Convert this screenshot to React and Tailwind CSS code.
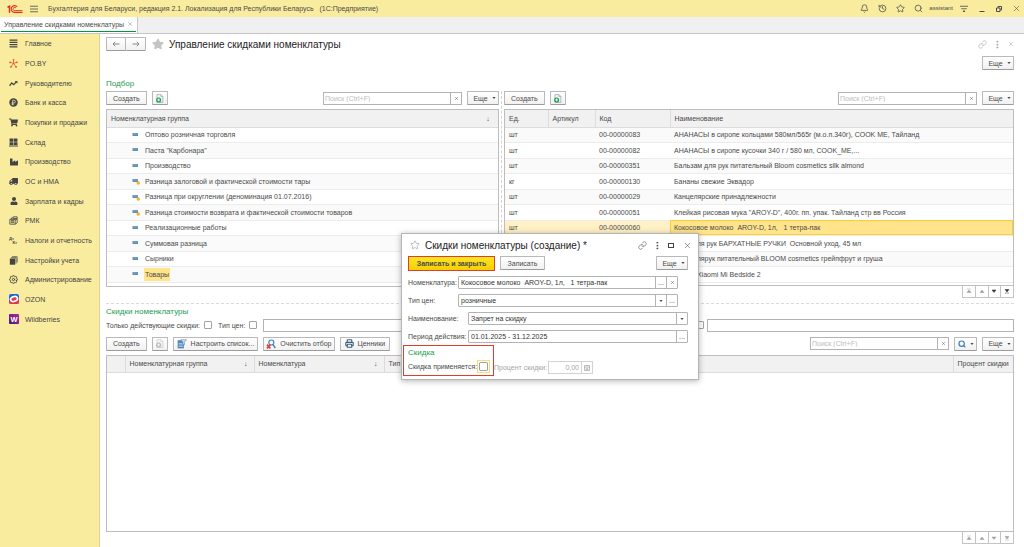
import React from "react";
import { Bell, History, Link, Printer, Search, Star, X } from "lucide-react";
import { FaIndustry, FaShoppingCart, FaStar, FaTruck, FaUser } from "react-icons/fa";
import { FiSettings } from "react-icons/fi";

const groups = [
  { name: "Оптово розничная торговля" },
  { name: 'Паста "Карбонара"' },
  { name: "Производство" },
  { name: "Разница залоговой и фактической стоимости тары", marked: true },
  { name: "Разница при округлении (деноминация 01.07.2016)", marked: true },
  { name: "Разница стоимости возврата и фактической стоимости товаров", marked: true },
  { name: "Реализационные работы" },
  { name: "Суммовая разница" },
  { name: "Сырники" },
  { name: "Товары", active: true },
];

const products = [
  { unit: "шт", code: "00-00000083", name: "АНАНАСЫ в сиропе кольцами 580мл/565г (м.о.п.340г), COOK ME, Тайланд" },
  { unit: "шт", code: "00-00000082", name: "АНАНАСЫ в сиропе кусочки 340 г / 580 мл, COOK_ME,..." },
  { unit: "шт", code: "00-00000351", name: "Бальзам для рук питательный Bloom cosmetics silk almond" },
  { unit: "кг", code: "00-00000130", name: "Бананы свежие Эквадор" },
  { unit: "шт", code: "00-00000029", name: "Канцелярские принадлежности" },
  { unit: "шт", code: "00-00000051", name: 'Клейкая рисовая мука "AROY-D", 400г. пп. упак. Тайланд стр вв Россия' },
  { unit: "шт", code: "00-00000060", name: "Кокосовое молоко  AROY-D, 1л,   1 тетра-пак", active: true },
  { unit: "шт", code: "00-00000071", name: "Крем для рук БАРХАТНЫЕ РУЧКИ  Основной уход, 45 мл" },
  { unit: "шт", code: "00-00000072", name: "Крем длярук питательный BLOOM cosmetics грейпфрут и груша" },
  { unit: "шт", code: "00-00000090", name: "Лампа Xiaomi Mi Bedside 2" },
];

/* ---------- icons ---------- */

const Logo = () => (
  <svg viewBox="0 0 32 20" className="h-[10px] w-4" fill="none" stroke="#e0301e" strokeWidth="2.200">
    <path d="M1 6.500 5 4.500V17.600" strokeWidth="3" />
    <path d="M20.500 5.800A6.800 6.800 0 1 0 15.500 16.800H31" />
    <path d="M18 8.300A3.200 3.200 0 1 0 15.500 13.200H31" strokeWidth="1.800" />
  </svg>
);

const LinesIcon = () => (
  <svg viewBox="0 0 16 16" className="size-[9px]" stroke="currentColor" strokeWidth="2">
    <path d="M1 2h14M1 6h14M1 10h14M1 14h14" />
  </svg>
);

const SparkIcon = () => (
  <svg viewBox="0 0 16 16" className="size-[9px]" stroke="#e2472f" strokeWidth="1.4" fill="#e2472f">
    <path d="M8 8V2M8 8l5.500-2M8 8l4 5M8 8l-4 5M8 8 2.500 6" />
    <circle cx="8" cy="1.500" r=".9" />
    <circle cx="14" cy="6" r=".9" />
    <circle cx="12.500" cy="14" r=".9" />
    <circle cx="3.500" cy="14" r=".9" />
    <circle cx="2" cy="6" r=".9" />
  </svg>
);

const TrendIcon = () => (
  <svg viewBox="0 0 16 16" className="size-[9px]" fill="none" stroke="currentColor" strokeWidth="2.200">
    <path d="m1 12 4-5 3.500 3L13 5" />
    <path d="M10 3.500h5v5z" fill="currentColor" stroke="none" />
  </svg>
);

const RubleIcon = () => (
  <svg viewBox="0 0 16 16" className="size-[9px]">
    <circle cx="8" cy="8" r="7.500" fill="currentColor" />
    <path d="M6.500 13V4H9a2.300 2.300 0 0 1 0 4.800H4.500M4.500 11H9" fill="none" stroke="#faec9e" strokeWidth="1.300" />
  </svg>
);

const StockIcon = () => (
  <svg viewBox="0 0 16 16" className="size-[9px]" fill="currentColor">
    <path d="M1 1h6.500v5.500H1zM8.500 1H15v5.500H8.500zM1 7.500h6.500v5H1zM8.500 7.500H15v5H8.500zM0 13.500h16V15H0z" />
  </svg>
);

const CashboxIcon = () => (
  <svg viewBox="0 0 16 16" className="size-[9px]" fill="none" stroke="currentColor" strokeWidth="1.500">
    <path d="M1.500 6H11v8.500H1.500zM4 5.500V3.500h3M7.500 1.500h7v3h-7zM11 7l3.500-1.500V12L11 14.500" />
    <path d="M3.500 8.500h5.500M3.500 11h5.500" strokeWidth="1.800" />
  </svg>
);

const DebitIcon = () => (
  <svg viewBox="0 0 16 16" className="size-[9px]" fill="currentColor" fontSize="7.500" fontWeight="700">
    <text x="0" y="7">Дт</text>
    <text x="6" y="14">Кт</text>
  </svg>
);

const BooksIcon = () => (
  <svg viewBox="0 0 16 16" className="size-[9px]" fill="currentColor">
    <path d="M1.500 4.500h9.500V15.500H1.500z" />
    <path d="M3.500 3h9v10.500M5.500 1.200h9V11.500" fill="none" stroke="currentColor" strokeWidth="1.300" />
  </svg>
);

const OzonIcon = () => (
  <svg viewBox="0 0 20 20" className="size-[10px]">
    <rect width="20" height="20" rx="4" fill="#1768e8" />
    <path d="M0 12c4 6 14 6 20-3v7a4 4 0 0 1-4 4H4a4 4 0 0 1-4-4z" fill="#e8354c" />
    <ellipse cx="10" cy="10" rx="8.800" ry="6.500" fill="#fff" transform="rotate(-18 10 10)" />
    <ellipse cx="10" cy="10" rx="5.500" ry="3.200" fill="#e8354c" transform="rotate(-18 10 10)" />
  </svg>
);

const WbIcon = () => (
  <svg viewBox="0 0 20 20" className="size-[10px]">
    <defs>
      <linearGradient id="wb" x1="0" y1="1" x2="1" y2="0">
        <stop offset="0" stopColor="#4b1a78" />
        <stop offset="1" stopColor="#b0289c" />
      </linearGradient>
    </defs>
    <rect width="20" height="20" rx="1.500" fill="url(#wb)" />
    <text x="10" y="15.500" textAnchor="middle" fontSize="15" fontWeight="700" fill="#fff">W</text>
  </svg>
);

const CopyIcon = ({ muted }) => (
  <svg viewBox="0 0 16 16" className={muted ? "size-[9px] opacity-50 grayscale" : "size-[9px]"}>
    <path d="M3.500 1h7L14 4.500V15H3.500z" fill="#eef3f7" stroke="#8aa0b2" strokeWidth="1.200" />
    <path d="M10.500 1v3.500H14" fill="none" stroke="#8aa0b2" />
    <circle cx="6.500" cy="10.500" r="4.500" fill="#23a04d" />
    <path d="M6.500 8v5M4 10.500h5" stroke="#fff" strokeWidth="1.600" />
  </svg>
);

const ListFilterIcon = () => (
  <svg viewBox="0 0 16 16" className="size-[10px]">
    <path d="M1 2h10v13H1z" fill="#4c86b8" />
    <path d="M2.500 7h7M2.500 9.500h7M2.500 12h7" stroke="#dbe8f2" />
    <path d="M6 1h9.500L12 5v4.500L9.500 8V5z" fill="#d4dde5" stroke="#5b7f9e" strokeWidth=".8" />
  </svg>
);

const ClearFilterIcon = () => (
  <svg viewBox="0 0 16 16" className="size-[10px]" fill="none">
    <circle cx="8.500" cy="5.500" r="4" stroke="#3f7fb5" strokeWidth="1.800" />
    <path d="m11 8.500 4 6" stroke="#3f7fb5" strokeWidth="2.200" />
    <path d="m1.500 9 5.500 6M7 9l-5.500 6" stroke="#e03a2f" strokeWidth="2.400" />
  </svg>
);

const ItemIcon = ({ marked }) => (
  <svg viewBox="0 0 18 16" className="h-2 w-[9px]">
    <rect x="1" y="4" width="11" height="6" fill="#5f8cb5" />
    <path d="M2 6h9" stroke="#a9c4dc" />
    {marked && <circle cx="12.500" cy="12" r="3.500" fill="#f0b429" />}
  </svg>
);

const menu = [
  { title: "Главное", icon: <LinesIcon /> },
  { title: "PO.BY", icon: <SparkIcon /> },
  { title: "Руководителю", icon: <TrendIcon /> },
  { title: "Банк и касса", icon: <RubleIcon /> },
  { title: "Покупки и продажи", icon: <FaShoppingCart size={9} /> },
  { title: "Склад", icon: <StockIcon /> },
  { title: "Производство", icon: <FaIndustry size={8} /> },
  { title: "ОС и НМА", icon: <FaTruck size={9} className="-scale-x-100" /> },
  { title: "Зарплата и кадры", icon: <FaUser size={8} /> },
  { title: "РМК", icon: <CashboxIcon /> },
  { title: "Налоги и отчетность", icon: <DebitIcon /> },
  { title: "Настройки учета", icon: <BooksIcon /> },
  { title: "Администрирование", icon: <FiSettings size={9} strokeWidth={2.5} /> },
  { title: "OZON", icon: <OzonIcon /> },
  { title: "Wildberries", icon: <WbIcon /> },
];

/* ---------- controls ---------- */

const Caret = () => (
  <svg viewBox="0 0 8 5" className="h-[2px] w-[4px] shrink-0" fill="currentColor">
    <path d="M0 0h8L4 5z" />
  </svg>
);

const Button = ({ children, className = "px-[6px]", ...rest }) => (
  <button
    className={`flex h-[14px] shrink-0 items-center justify-center gap-1 whitespace-nowrap rounded-[1px] border border-[#b9b9b9] border-b-[#9c9c9c] bg-linear-to-b from-white to-[#f1f1f1] ${className}`}
    {...rest}
  >
    {children}
  </button>
);

const MoreButton = () => (
  <Button className="w-8 pl-[3px]">
    Еще <Caret />
  </Button>
);

const SearchBox = () => (
  <div className="flex h-[13px] w-[139px] border border-[#b3b3b3] bg-white">
    <input
      aria-label="Поиск"
      placeholder="Поиск (Ctrl+F)"
      className="min-w-0 flex-1 px-px outline-none placeholder:text-[#bdbdbd]"
    />
    <button aria-label="Очистить" className="flex w-[11px] items-center justify-center border-l border-[#b3b3b3]">
      <X size={5} />
    </button>
  </div>
);

const Check = ({ id, className = "" }) => (
  <input
    id={id}
    type="checkbox"
    className={`size-2 shrink-0 appearance-none rounded-[1px] border border-[#a3a3a3] bg-white checked:bg-[#009646] ${className}`}
  />
);

const navPaths = [
  { label: "В начало", d: "M2 2h8M6 4 2 9h8z" },
  { label: "Вверх", d: "M6 4 2 9h8z" },
  { label: "Вниз", d: "M2 4h8L6 9z" },
  { label: "В конец", d: "M2 3h8L6 8zM2 10h8" },
];

const ListNav = ({ downActive }) => (
  <div className="ml-auto flex w-[52px] border-x border-b border-[#c4c4c4]">
    {navPaths.map((item, idx) => (
      <button
        key={item.label}
        aria-label={item.label}
        className={`flex h-[11px] flex-1 items-center justify-center border-l border-[#c4c4c4] first:border-l-0 ${
          downActive && idx > 1 ? "text-[#333]" : "text-[#a0a0a0]"
        }`}
      >
        <svg viewBox="0 0 12 12" className="size-[6px]" fill="currentColor" stroke="currentColor">
          <path d={item.d} />
        </svg>
      </button>
    ))}
  </div>
);

const Field = ({ id, label, value, wide, children }) => (
  <div className="flex items-center">
    <label htmlFor={id} className={wide ? "w-[60px] shrink-0" : "w-[50px] shrink-0"}>
      {label}
    </label>
    <div className="flex h-[13px] w-[220px] rounded-[1px] border border-[#b3b3b3]">
      <input id={id} defaultValue={value} className="min-w-0 flex-1 px-[2px] text-[#333] outline-none" />
      {children}
    </div>
  </div>
);

const FieldButton = ({ label, children }) => (
  <button aria-label={label} className="flex w-[11px] items-center justify-center border-l border-[#b3b3b3]">
    {children}
  </button>
);

/* ---------- page parts ---------- */

const TopBar = () => (
  <header className="flex h-[17px] items-center bg-[#faec9e] pl-[7px] pr-[3px]">
    <Logo />
    <button aria-label="Меню" className="ml-[7px]">
      <svg viewBox="0 0 16 16" className="size-2" stroke="currentColor" strokeWidth="1.600">
        <path d="M0 2.500h16M0 8h16M0 13.500h16" />
      </svg>
    </button>
    <span className="ml-[10px] whitespace-pre">
      Бухгалтерия для Беларуси, редакция 2.1. Локализация для Республики Беларусь{"   "}(1С:Предприятие)
    </span>
    <div className="ml-auto flex items-center gap-[9px]">
      <button aria-label="Уведомления"><Bell size={9} /></button>
      <button aria-label="История"><History size={9} /></button>
      <button aria-label="Избранное"><Star size={9} /></button>
      <button aria-label="Поиск"><Search size={9} /></button>
    </div>
    <span className="ml-[6px] text-[6px]">assistant</span>
    <button aria-label="Настройки" className="ml-[7px]">
      <svg viewBox="0 0 16 16" className="size-2" fill="currentColor" stroke="currentColor" strokeWidth="1.600">
        <path d="M0 2.500h16M2.500 7.500h11" />
        <path d="M6 12h4l-2 2z" />
      </svg>
    </button>
    <div className="ml-[10px] flex items-center gap-[9px]">
      <button aria-label="Свернуть">
        <svg viewBox="0 0 16 16" className="size-2" stroke="currentColor" strokeWidth="2"><path d="M3 13h10" /></svg>
      </button>
      <button aria-label="Развернуть">
        <svg viewBox="0 0 16 16" className="size-2" fill="none" stroke="currentColor" strokeWidth="2">
          <path d="M3 6h7v7H3zM6 6V3h7v7h-3" />
        </svg>
      </button>
      <button aria-label="Закрыть"><X size={9} strokeWidth={1.5} /></button>
    </div>
  </header>
);

const Sidebar = () => (
  <nav className="w-[100px] shrink-0 border-r border-[#d8d0a8] bg-[#faec9e]">
    <div className="grid h-[295px] auto-rows-fr">
      {menu.map((item) => (
        <a key={item.title} href="#" className="flex items-center pl-2 text-[#444]">
          <span className="flex w-[11px] justify-center">{item.icon}</span>
          <span className="ml-[6px] whitespace-nowrap">{item.title}</span>
        </a>
      ))}
    </div>
  </nav>
);

const GroupTable = () => (
  <div className="flex-1 overflow-hidden border border-[#bdbdbd] pb-[2px]">
    <table className="w-full table-fixed border-collapse">
      <thead>
        <tr className="h-[17px] border-b border-[#dcdcdc] bg-[#f1f1f1] text-left">
          <th className="py-0 pl-1 font-normal">Номенклатурная группа</th>
          <th className="w-5 p-0 text-center font-normal">↓</th>
        </tr>
      </thead>
      <tbody>
        {groups.map((item) => (
          <tr key={item.name} className="border-b border-[#ececec] odd:h-[15px] even:h-[16px] even:bg-[#fafafa]">
            <td colSpan={2} className="p-0">
              <div className="flex items-center pl-[25px]">
                <ItemIcon marked={item.marked} />
                <span className={`ml-[3px] whitespace-nowrap px-px ${item.active ? "bg-[#ffe48c] py-[2px]" : ""}`}>
                  {item.name}
                </span>
              </div>
            </td>
          </tr>
        ))}
      </tbody>
    </table>
  </div>
);

const ProductTable = () => (
  <div className="flex-1 overflow-hidden border border-[#bdbdbd] pb-[2px]">
    <table className="w-full table-fixed border-collapse">
      <thead>
        <tr className="h-[17px] border-b border-[#dcdcdc] bg-[#f1f1f1] text-left">
          <th className="w-[43px] py-0 pl-1 font-normal">Ед.</th>
          <th className="w-[47px] border-l border-[#dcdcdc] py-0 pl-1 font-normal">Артикул</th>
          <th className="w-[75px] border-l border-[#dcdcdc] py-0 pl-1 font-normal">Код</th>
          <th className="border-l border-[#dcdcdc] py-0 pl-1 font-normal">Наименование</th>
        </tr>
      </thead>
      <tbody>
        {products.map((item) => (
          <tr
            key={item.code}
            className={`border-b border-[#ececec] odd:h-[15px] even:h-[16px] ${
              item.active ? "bg-[#fff1c6]" : "odd:bg-[#fafafa]"
            }`}
          >
            <td className="py-0 pl-1">{item.unit}</td>
            <td className="p-0" />
            <td className="py-0 pl-1">{item.code}</td>
            <td
              className={`whitespace-pre py-0 pl-1 ${
                item.active ? "bg-[#ffe48c] outline outline-[#fc3] -outline-offset-1" : ""
              }`}
            >
              {item.name}
            </td>
          </tr>
        ))}
      </tbody>
    </table>
  </div>
);

const Selection = () => (
  <section>
    <h2 className="text-[8px] leading-[12px] text-[#1e9b51]">Подбор</h2>
    <div className="mt-px grid grid-cols-[393fr_5px_510fr]">
      <div className="flex flex-col">
        <div className="mb-1 flex items-center gap-[5px]">
          <Button>Создать</Button>
          <Button className="w-4" aria-label="Скопировать"><CopyIcon /></Button>
          <div className="ml-auto"><SearchBox /></div>
          <MoreButton />
        </div>
        <GroupTable />
        <div className="h-[11px]" />
      </div>
      <div className="mb-[11px] ml-[2px] border-l border-dashed border-[#d4d4d4]" />
      <div className="flex flex-col">
        <div className="mb-1 flex items-center gap-[5px]">
          <Button>Создать</Button>
          <Button className="w-4" aria-label="Скопировать"><CopyIcon /></Button>
          <div className="ml-auto"><SearchBox /></div>
          <MoreButton />
        </div>
        <ProductTable />
        <ListNav downActive />
      </div>
    </div>
  </section>
);

const Discounts = () => (
  <section className="mt-[5px] flex flex-1 flex-col border-t border-dashed border-[#dadada] pt-[2px]">
    <h2 className="text-[8px] leading-[12px] text-[#1e9b51]">Скидки номенклатуры</h2>
    <div className="mt-px flex items-center">
      <label htmlFor="only-active" className="whitespace-nowrap">Только действующие скидки:</label>
      <Check id="only-active" className="ml-1" />
      <label htmlFor="use-price" className="ml-[6px] whitespace-nowrap">Тип цен:</label>
      <Check id="use-price" className="ml-1" />
      <input aria-label="Тип цен" className="ml-[6px] h-[13px] min-w-0 flex-[220] border border-[#b3b3b3]" />
      <label htmlFor="use-item" className="ml-[7px] w-[210px] text-right">Номенклатура:</label>
      <Check id="use-item" className="ml-1" />
      <input aria-label="Номенклатура" className="ml-[3px] h-[13px] w-[307px] border border-[#b3b3b3]" />
    </div>
    <div className="mb-1 mt-[5px] flex items-center gap-[5px]">
      <Button>Создать</Button>
      <Button className="w-4" aria-label="Скопировать" disabled><CopyIcon muted /></Button>
      <Button className="px-[3px]"><ListFilterIcon /> Настроить список...</Button>
      <Button className="px-[2px]"><ClearFilterIcon /> Очистить отбор</Button>
      <Button className="px-[4px]"><Printer size={9} strokeWidth={3} color="#3b5f80" /> Ценники</Button>
      <div className="ml-auto"><SearchBox /></div>
      <Button className="w-[23px]" aria-label="Найти">
        <Search size={8} strokeWidth={3.5} color="#3f7fb5" /> <Caret />
      </Button>
      <MoreButton />
    </div>
    <div className="flex-1 border border-[#bdbdbd]">
      <table className="w-full table-fixed border-collapse">
        <thead>
          <tr className="h-[17px] border-b border-[#dcdcdc] bg-[#f1f1f1] text-left *:py-0 *:font-normal">
            <th className="w-[18px]" />
            <th className="w-[129px] border-l border-[#dcdcdc] px-1">
              <span className="flex justify-between pr-[2px]">Номенклатурная группа <span>↓</span></span>
            </th>
            <th className="w-[130px] border-l border-[#dcdcdc] px-1">
              <span className="flex justify-between pr-[2px]">Номенклатура <span>↓</span></span>
            </th>
            <th className="border-l border-[#dcdcdc] px-1">Тип</th>
            <th className="w-[60px] whitespace-nowrap border-l border-[#dcdcdc] pl-1">Процент скидки</th>
          </tr>
        </thead>
      </table>
    </div>
    <ListNav />
  </section>
);

const DiscountDialog = () => (
  <div
    role="dialog"
    aria-label="Скидки номенклатуры (создание)"
    className="absolute left-[401px] top-[233px] w-[298px] border border-[#b5b5b5] bg-white pb-[3px] shadow-[0_1px_6px_rgba(0,0,0,0.3)]"
  >
    <div className="flex h-[22px] items-center pl-2 pr-[6px]">
      <Star size={10} strokeWidth={1.5} className="text-[#999]" />
      <h2 className="ml-[5px] whitespace-nowrap text-[10px] text-[#222]">Скидки номенклатуры (создание) *</h2>
      <div className="ml-auto flex items-center gap-[9px]">
        <button aria-label="Ссылка"><Link size={9} strokeWidth={1.5} /></button>
        <button aria-label="Действия" className="text-[10px] font-bold leading-[9px]">⁝</button>
        <button aria-label="Развернуть" className="h-[5px] w-[6px] border border-[#444]" />
        <button aria-label="Закрыть"><X size={9} strokeWidth={1.5} /></button>
      </div>
    </div>
    <div className="flex gap-[5px] pl-[6px] pr-[10px]">
      <button className="h-[15px] w-[87px] border border-[#e33b2e] bg-linear-to-b from-[#ffe51f] to-[#f5cf00] font-bold">
        Записать и закрыть
      </button>
      <Button className="w-[45px]">Записать</Button>
      <div className="ml-auto"><MoreButton /></div>
    </div>
    <div className="mt-[5px] flex flex-col gap-[5px] pl-[6px]">
      <Field id="item" label="Номенклатура:" value="Кокосовое молоко  AROY-D, 1л,   1 тетра-пак">
        <FieldButton label="Выбрать">...</FieldButton>
        <FieldButton label="Очистить"><X size={5} /></FieldButton>
      </Field>
      <Field id="price" label="Тип цен:" value="розничные">
        <FieldButton label="Список"><Caret /></FieldButton>
        <FieldButton label="Выбрать">...</FieldButton>
      </Field>
      <Field id="title" label="Наименование:" value="Запрет на скидку" wide>
        <FieldButton label="Список"><Caret /></FieldButton>
      </Field>
      <Field id="period" label="Период действия:" value="01.01.2025 - 31.12.2025" wide>
        <FieldButton label="Выбрать">...</FieldButton>
      </Field>
    </div>
    <div className="mt-[2px] flex items-end pl-px">
      <fieldset className="h-[31px] w-[91px] border border-[#e33b2e] pl-1">
        <h3 className="text-[8px] leading-[14px] text-[#1e9b51]">Скидка</h3>
        <div className="flex items-center">
          <label htmlFor="apply" className="w-[69px] whitespace-nowrap">Скидка применяется:</label>
          <span className="flex border border-[#f7dc6f] p-px"><Check id="apply" className="size-[9px]" /></span>
        </div>
      </fieldset>
      <div className="mb-[2px] flex items-center text-[#a6a6a6]">
        <label htmlFor="percent" className="w-[54px] whitespace-nowrap">Процент скидки:</label>
        <div className="flex h-[13px] w-[45px] border border-[#d2d2d2]">
          <input id="percent" defaultValue="0,00" disabled className="min-w-0 flex-1 pr-[2px] text-right" />
          <button disabled aria-label="Калькулятор" className="flex w-[11px] items-center justify-center border-l border-[#d2d2d2]">
            <svg viewBox="0 0 12 12" className="size-[6px]" fill="none" stroke="currentColor" strokeWidth="1.500">
              <path d="M1 1h10v10H1zM1 4h10M3.500 6.500h5M3.500 9h5" />
            </svg>
          </button>
        </div>
      </div>
    </div>
  </div>
);

const App = () => {
  return (
    <div className="relative flex min-h-screen flex-col bg-white font-['Liberation_Sans',Arial,sans-serif] text-[7px] leading-[9px] text-[#4a4a4a]">
      <TopBar />
      <div className="flex h-[17px] border-b border-[#c6c6c6] bg-[#f0f0f0]">
        <div className="flex border-r border-[#c6c6c6] bg-white px-px pb-px">
          <a href="#" className="flex items-center gap-[3px] whitespace-nowrap border-b border-[#009646] px-[3px]">
            Управление скидками номенклатуры <X size={6} className="text-[#888]" />
          </a>
        </div>
      </div>
      <div className="flex flex-1">
        <Sidebar />
        <main className="flex min-w-0 flex-1 flex-col pb-[3px] pl-[6px] pr-[10px] pt-[3px]">
          <div className="flex items-center">
            <div className="flex">
              <Button className="w-5 text-[#888]" aria-label="Назад">
                <svg viewBox="0 0 16 12" className="h-[6px] w-2" fill="none" stroke="currentColor" strokeWidth="2">
                  <path d="M15 6H2M6.500 1.500 2 6l4.500 4.500" />
                </svg>
              </Button>
              <Button className="w-5 border-l-0 text-[#888]" aria-label="Вперед">
                <svg viewBox="0 0 16 12" className="h-[6px] w-2" fill="none" stroke="currentColor" strokeWidth="2">
                  <path d="M1 6h13M9.500 1.500 14 6l-4.500 4.500" />
                </svg>
              </Button>
            </div>
            <FaStar size={12} color="#c4c4c4" className="ml-[6px]" />
            <h1 className="ml-[5px] text-[10px] text-[#222]">Управление скидками номенклатуры</h1>
            <div className="ml-auto flex items-center gap-[9px] text-[#a0a0a0]">
              <button aria-label="Ссылка"><Link size={9} strokeWidth={1.5} /></button>
              <button aria-label="Действия" className="text-[10px] font-bold leading-[9px]">⁝</button>
              <button aria-label="Закрыть"><X size={6} /></button>
            </div>
          </div>
          <div className="mb-2 mt-[5px] flex justify-end"><MoreButton /></div>
          <Selection />
          <Discounts />
        </main>
      </div>
      <DiscountDialog />
    </div>
  );
};

export default App;
